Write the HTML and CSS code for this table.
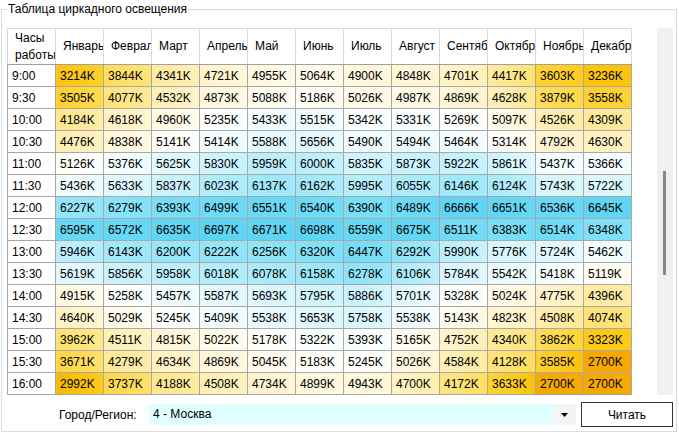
FILE: index.html
```html
<!DOCTYPE html>
<html lang="ru">
<head>
<meta charset="utf-8">
<title>Таблица циркадного освещения</title>
<link rel="stylesheet" href="styles.css">
</head>
<body>
<fieldset class="group">
  <legend class="group-title">Таблица циркадного освещения</legend>
  <div class="grid-area">
    <table class="light-table">
      <colgroup>
        <col><col><col><col><col><col><col><col><col><col><col><col><col>
      </colgroup>
      <thead>
        <tr>
          <th class="hours">Часы работы</th>
          <th>Январь</th><th>Февраль</th><th>Март</th><th>Апрель</th><th>Май</th><th>Июнь</th>
          <th>Июль</th><th>Август</th><th>Сентябрь</th><th>Октябрь</th><th>Ноябрь</th><th>Декабрь</th>
        </tr>
      </thead>
      <tbody>
        <tr><td>9:00</td><td>3214K</td><td>3844K</td><td>4341K</td><td>4721K</td><td>4955K</td><td>5064K</td><td>4900K</td><td>4848K</td><td>4701K</td><td>4417K</td><td>3603K</td><td>3236K</td></tr>
        <tr><td>9:30</td><td>3505K</td><td>4077K</td><td>4532K</td><td>4873K</td><td>5088K</td><td>5186K</td><td>5026K</td><td>4987K</td><td>4869K</td><td>4628K</td><td>3879K</td><td>3558K</td></tr>
        <tr><td>10:00</td><td>4184K</td><td>4618K</td><td>4960K</td><td>5235K</td><td>5433K</td><td>5515K</td><td>5342K</td><td>5331K</td><td>5269K</td><td>5097K</td><td>4526K</td><td>4309K</td></tr>
        <tr><td>10:30</td><td>4476K</td><td>4838K</td><td>5141K</td><td>5414K</td><td>5588K</td><td>5656K</td><td>5490K</td><td>5494K</td><td>5464K</td><td>5314K</td><td>4792K</td><td>4630K</td></tr>
        <tr><td>11:00</td><td>5126K</td><td>5376K</td><td>5625K</td><td>5830K</td><td>5959K</td><td>6000K</td><td>5835K</td><td>5873K</td><td>5922K</td><td>5861K</td><td>5437K</td><td>5366K</td></tr>
        <tr><td>11:30</td><td>5436K</td><td>5633K</td><td>5837K</td><td>6023K</td><td>6137K</td><td>6162K</td><td>5995K</td><td>6055K</td><td>6146K</td><td>6124K</td><td>5743K</td><td>5722K</td></tr>
        <tr><td>12:00</td><td>6227K</td><td>6279K</td><td>6393K</td><td>6499K</td><td>6551K</td><td>6540K</td><td>6390K</td><td>6489K</td><td>6666K</td><td>6651K</td><td>6536K</td><td>6645K</td></tr>
        <tr><td>12:30</td><td>6595K</td><td>6572K</td><td>6635K</td><td>6697K</td><td>6671K</td><td>6698K</td><td>6559K</td><td>6675K</td><td>6511K</td><td>6383K</td><td>6514K</td><td>6348K</td></tr>
        <tr><td>13:00</td><td>5946K</td><td>6143K</td><td>6200K</td><td>6222K</td><td>6256K</td><td>6320K</td><td>6447K</td><td>6292K</td><td>5990K</td><td>5776K</td><td>5724K</td><td>5462K</td></tr>
        <tr><td>13:30</td><td>5619K</td><td>5856K</td><td>5958K</td><td>6018K</td><td>6078K</td><td>6158K</td><td>6278K</td><td>6106K</td><td>5784K</td><td>5542K</td><td>5418K</td><td>5119K</td></tr>
        <tr><td>14:00</td><td>4915K</td><td>5258K</td><td>5457K</td><td>5587K</td><td>5693K</td><td>5795K</td><td>5886K</td><td>5701K</td><td>5328K</td><td>5024K</td><td>4775K</td><td>4396K</td></tr>
        <tr><td>14:30</td><td>4640K</td><td>5029K</td><td>5245K</td><td>5409K</td><td>5538K</td><td>5653K</td><td>5758K</td><td>5538K</td><td>5143K</td><td>4823K</td><td>4508K</td><td>4074K</td></tr>
        <tr><td>15:00</td><td>3962K</td><td>4511K</td><td>4815K</td><td>5022K</td><td>5178K</td><td>5322K</td><td>5393K</td><td>5165K</td><td>4752K</td><td>4340K</td><td>3862K</td><td>3323K</td></tr>
        <tr><td>15:30</td><td>3671K</td><td>4279K</td><td>4634K</td><td>4869K</td><td>5045K</td><td>5183K</td><td>5245K</td><td>5026K</td><td>4584K</td><td>4128K</td><td>3585K</td><td>2700K</td></tr>
        <tr><td>16:00</td><td>2992K</td><td>3737K</td><td>4188K</td><td>4508K</td><td>4734K</td><td>4899K</td><td>4943K</td><td>4700K</td><td>4172K</td><td>3633K</td><td>2700K</td><td>2700K</td></tr>
      </tbody>
    </table>
    <div class="spacer"></div>
    <div class="scroll-track"><div class="scroll-thumb"></div></div>
  </div>
  <div class="controls">
    <span class="region-label">Город/Регион:</span>
    <div class="combo">
      <span class="combo-value">4 - Москва</span>
      <span class="combo-arrow"><svg width="7" height="4" viewBox="0 0 7 4"><path d="M0 0H7L3.5 4Z" fill="#000"/></svg></span>
    </div>
    <button class="read-btn" type="button">Читать</button>
  </div>
</fieldset>
<script src="script.js"></script>
</body>
</html>
```

FILE: styles.css
```css
* { box-sizing: border-box; }
html, body { margin: 0; padding: 0; background: #ffffff; }
body {
  font-family: "Liberation Sans", Arial, sans-serif;
  font-size: 12px;
  color: #000;
  width: 679px;
  height: 437px;
  overflow: hidden;
}
.group {
  margin: 2px 2px 0 1px;
  padding: 11px 3px 0 5px;
  border: 1px solid #dcdcdc;
  min-width: 0;
  height: 430px;
}
.group-title {
  padding: 0 1px;
  margin: 0;
  line-height: 15px;
  font-size: 12px;
}
.grid-area {
  display: flex;
  height: 367px;
}
.light-table {
  border-collapse: collapse;
  table-layout: fixed;
  width: 625px;
  flex: none;
  align-self: flex-start;
}
.light-table col { width: 48px; }
.light-table th {
  height: 36px;
  padding: 0 2px 0 7px;
  font-weight: normal;
  text-align: left;
  line-height: 17px;
  white-space: nowrap;
  overflow: hidden;
  border: 1px solid #d9d9d9;
  border-bottom-color: #a0a0a0;
  background: #fff;
}
.light-table th.hours { white-space: normal; overflow-wrap: normal; word-break: normal; }
.light-table td {
  height: 22px;
  padding: 0 0 0 4px;
  line-height: 14px;
  white-space: nowrap;
  overflow: hidden;
  border: 1px solid #a8a8a8;
  background: #fff;
}
.spacer { flex: 1; }
.scroll-track {
  width: 16px;
  height: 367px;
  background: #f0f0f0;
  padding: 143px 0 0 6px;
}
.scroll-thumb {
  width: 3px;
  height: 104px;
  background: #888;
}
.controls {
  display: flex;
  align-items: center;
  margin-top: 7px;
  padding-left: 52px;
  height: 25px;
}
.region-label { width: 90px; }
.combo {
  display: flex;
  width: 427px;
  height: 21px;
}
.combo-value {
  flex: 1;
  background: #e0ffff;
  padding-left: 4px;
  line-height: 21px;
}
.combo-arrow {
  width: 23px;
  background: #f4f4f4;
  display: flex;
  align-items: center;
  justify-content: center;
}
.read-btn {
  margin-left: 5px;
  width: 92px;
  height: 25px;
  border: 1px solid #333;
  background: #fff;
  font-family: "Liberation Sans", Arial, sans-serif;
  font-size: 12px;
  color: #000;
  padding: 0;
}
```

FILE: script.js
```js
(function () {
  var stops = [
    [2700, [247, 169, 0]], [3000, [250, 184, 2]], [3250, [252, 198, 14]],
    [3600, [253, 211, 52]], [4000, [254, 225, 112]], [4400, [254, 236, 166]],
    [4800, [255, 245, 212]], [5100, [255, 252, 240]], [5250, [255, 255, 255]],
    [5500, [238, 251, 254]], [5800, [212, 245, 253]], [6100, [168, 234, 250]],
    [6400, [120, 222, 247]], [6700, [92, 212, 243]]
  ];
  function color(k) {
    if (k <= stops[0][0]) return stops[0][1];
    for (var i = 1; i < stops.length; i++) {
      if (k <= stops[i][0]) {
        var a = stops[i - 1], b = stops[i];
        var t = (k - a[0]) / (b[0] - a[0]);
        return a[1].map(function (v, j) { return Math.round(v + (b[1][j] - v) * t); });
      }
    }
    return stops[stops.length - 1][1];
  }
  function css(c) { return 'rgb(' + c.join(',') + ')'; }
  var rows = document.querySelectorAll('.light-table tbody tr');
  rows.forEach(function (tr) {
    var cells = Array.prototype.slice.call(tr.children, 1);
    var vals = cells.map(function (td) { return parseInt(td.textContent, 10); });
    cells.forEach(function (td, i) {
      var k = vals[i];
      var next = i + 1 < vals.length ? vals[i + 1] : k;
      var mid = (k + next) / 2;
      td.style.background = 'linear-gradient(to right, ' + css(color(k)) + ', ' + css(color(mid)) + ')';
    });
  });
})();
```
